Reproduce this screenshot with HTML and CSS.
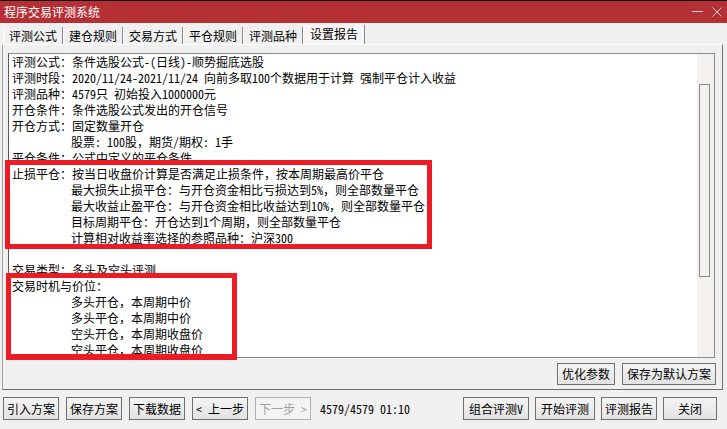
FILE: index.html
```html
<!DOCTYPE html>
<html lang="zh-CN">
<head>
  <meta charset="UTF-8">
  <title>程序交易评测系统</title>
  <link rel="stylesheet" href="styles.css">
</head>
<body>
  <div class="window">

    <!-- Title bar -->
    <div class="titlebar">
      <span class="title">程序交易评测系统</span>
      <div class="win-ctl">
        <svg width="11" height="12" viewBox="0 0 11 12"><line x1="0" y1="5.5" x2="11" y2="5.5" stroke="#f2d6d6" stroke-width="1"/></svg>
        <svg width="10" height="12" viewBox="0 0 10 12"><path d="M0.5 1.5 L9.5 10.5 M9.5 1.5 L0.5 10.5" stroke="#f2d6d6" stroke-width="1" fill="none"/></svg>
      </div>
    </div>

    <!-- Tabs -->
    <div class="tabs">
      <div class="tab">评测公式</div>
      <div class="tab">建仓规则</div>
      <div class="tab">交易方式</div>
      <div class="tab">平仓规则</div>
      <div class="tab">评测品种</div>
      <div class="tab active">设置报告</div>
    </div>

    <!-- Tab page: report text -->
    <div class="page">
      <div class="report">
        <div class="report-text">
          <p class="ln">评测公式：条件选股公式-(日线)-顺势掘底选股</p>
          <p class="ln">评测时段：2020/11/24-2021/11/24 向前多取100个数据用于计算 强制平仓计入收益</p>
          <p class="ln">评测品种：4579只 初始投入1000000元</p>
          <p class="ln">开仓条件：条件选股公式发出的开仓信号</p>
          <p class="ln">开仓方式：固定数量开仓</p>
          <p class="ln ind">股票: 100股，期货/期权: 1手</p>
          <p class="ln">平仓条件：公式中定义的平仓条件</p>
          <p class="ln">止损平仓：按当日收盘价计算是否满足止损条件，按本周期最高价平仓</p>
          <p class="ln ind">最大损失止损平仓：与开仓资金相比亏损达到5%，则全部数量平仓</p>
          <p class="ln ind">最大收益止盈平仓：与开仓资金相比收益达到10%，则全部数量平仓</p>
          <p class="ln ind">目标周期平仓：开仓达到1个周期，则全部数量平仓</p>
          <p class="ln ind">计算相对收益率选择的参照品种：沪深300</p>
          <p class="ln"></p>
          <p class="ln">交易类型：多头及空头评测</p>
          <p class="ln">交易时机与价位：</p>
          <p class="ln ind">多头开仓，本周期中价</p>
          <p class="ln ind">多头平仓，本周期中价</p>
          <p class="ln ind">空头开仓，本周期收盘价</p>
          <p class="ln ind">空头平仓，本周期收盘价</p>
        </div>
        <div class="scrollbar"><div class="thumb"></div></div>
      </div>

      <div class="page-actions">
        <button class="btn w58">优化参数</button>
        <button class="btn w94">保存为默认方案</button>
      </div>
    </div>

    <!-- Bottom toolbar -->
    <div class="footer">
      <button class="btn">引入方案</button>
      <button class="btn">保存方案</button>
      <button class="btn">下载数据</button>
      <button class="btn">&lt; 上一步</button>
      <button class="btn" disabled>下一步 &gt;</button>
      <span class="status">4579/4579 01:10</span>
      <div class="footer-right">
        <button class="btn w66">组合评测V</button>
        <button class="btn w60">开始评测</button>
        <button class="btn">评测报告</button>
        <button class="btn w54">关闭</button>
      </div>
    </div>

    <!-- Red highlight marks drawn over the report -->
    <div class="mark mark-stop"></div>
    <div class="mark mark-timing"></div>
  </div>
</body>
</html>
```

FILE: styles.css
```css
/* Base */
body {
  margin: 0;
  background: #f0f0f0;
  font: 12px/16px "Noto Sans Mono CJK SC", "Noto Sans CJK SC", sans-serif;
  color: #000;
}

.window {
  position: relative;
  width: 727px;
  height: 429px;
  overflow: hidden;
  background: #f0f0f0;
}

/* Title bar */
.titlebar {
  display: flex;
  align-items: center;
  height: 22px;
  border-top: 1px solid #111;
  background: #b53035;
  color: #fff;
  padding-left: 4px;
}

.title {
  flex: 1;
}

.win-ctl {
  display: flex;
  align-items: center;
  gap: 9px;
  margin-right: 5px;
}

/* Tabs */
.tabs {
  display: flex;
  align-items: flex-end;
  height: 21px;
  padding-left: 3px;
}

.tab {
  height: 17px;
  line-height: 17px;
  padding: 0 5px;
  border-left: 1px solid #fff;
  border-right: 1px solid #8a8a8a;
  font-size: 12px;
}

.tab.active {
  height: 19px;
  line-height: 17px;
  padding: 0 6px;
  background: #f6f6f6;
}

/* Tab page */
.page {
  height: 344px;
  margin: 0 4px 0 2px;
  border: 1px solid;
  border-color: #fff #6d6d6d #6d6d6d #a0a0a0;
}

.report {
  display: flex;
  box-sizing: border-box;
  height: 305px;
  margin: 8px 7px 0 5px;
  border: 1px solid #8c8c8c;
  border-left-color: #5a5a5a;
  background: #fff;
}

.report-text {
  flex: 1;
  padding-left: 3px;
  overflow: hidden;
}

.ln {
  margin: 0;
  height: 16px;
  white-space: nowrap;
}

.ln.ind {
  padding-left: 59px;
}

.scrollbar {
  box-sizing: border-box;
  width: 17px;
  padding-top: 30px;
  background: #f2f1f0;
}

.thumb {
  box-sizing: border-box;
  width: 11px;
  height: 193px;
  margin-left: 2px;
  border: 1px solid #8c8c8c;
}

.page-actions {
  display: flex;
  justify-content: flex-end;
  gap: 7px;
  padding: 5px 6px 0 0;
}

.page-actions .btn {
  height: 22px;
}

/* Buttons */
.btn {
  box-sizing: border-box;
  width: 56px;
  height: 23px;
  padding: 0;
  border: 1px solid #707070;
  background: linear-gradient(#f5f5f5, #e2e2e2);
  font: inherit;
  color: #000;
}

.btn:disabled {
  border-color: #adb2b5;
  background: #f4f4f4;
  color: #a0a0a0;
}

.w54 { width: 54px; }
.w58 { width: 58px; }
.w60 { width: 60px; }
.w66 { width: 66px; }
.w94 { width: 94px; }

/* Bottom toolbar */
.footer {
  display: flex;
  align-items: center;
  gap: 7px;
  padding: 7px 10px 0 3px;
}

.status {
  margin-left: 2px;
}

.footer-right {
  display: flex;
  gap: 6px;
  margin-left: auto;
}

/* Red highlight rectangles */
.mark {
  position: absolute;
  box-sizing: border-box;
  border: 5px solid #ed1c24;
}

.mark-stop {
  left: 5px;
  top: 160px;
  width: 427px;
  height: 89px;
}

.mark-timing {
  left: 6px;
  top: 273px;
  width: 231px;
  height: 87px;
  border-bottom-width: 6px;
}
```
